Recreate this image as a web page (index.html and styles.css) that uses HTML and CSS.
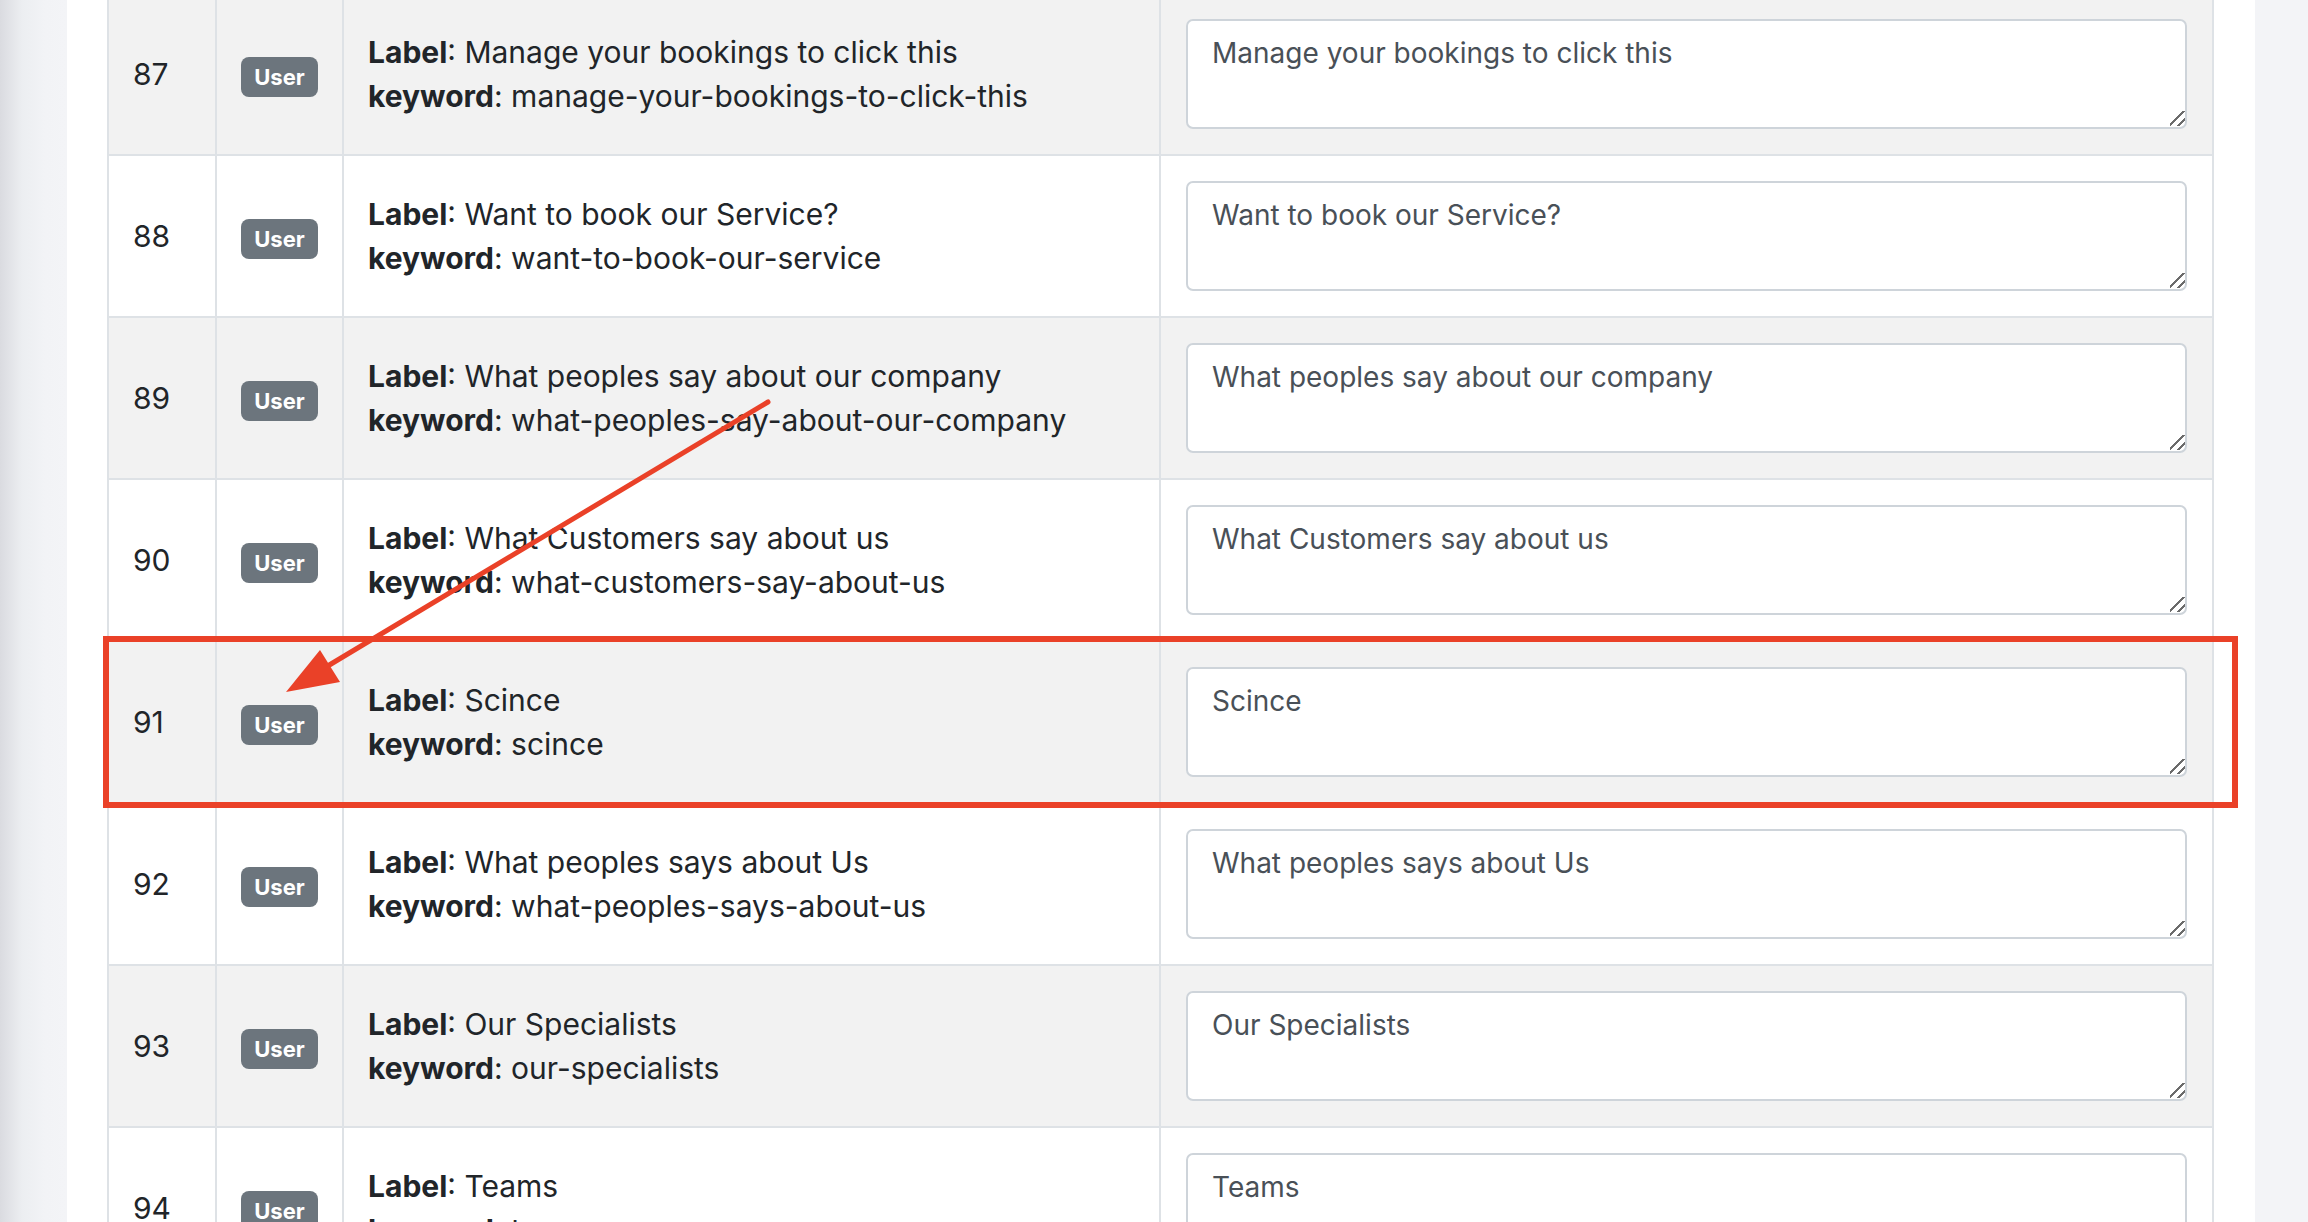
FILE: index.html
```html
<!DOCTYPE html>
<html lang="en">
<head>
<meta charset="utf-8">
<title>Translations</title>
<link rel="stylesheet" href="styles.css">
</head>
<body>
<div class="page">
  <div class="panel">
    <div class="table">
      <div class="row odd">
        <div class="cell num">87</div>
        <div class="cell role"><span class="badge">User</span></div>
        <div class="cell info"><div><b>Label</b>: Manage your bookings to click this</div><div><b>keyword</b>: manage-your-bookings-to-click-this</div></div>
        <div class="cell value"><div class="field"><textarea>Manage your bookings to click this</textarea></div></div>
      </div>
      <div class="row">
        <div class="cell num">88</div>
        <div class="cell role"><span class="badge">User</span></div>
        <div class="cell info"><div><b>Label</b>: Want to book our Service?</div><div><b>keyword</b>: want-to-book-our-service</div></div>
        <div class="cell value"><div class="field"><textarea>Want to book our Service?</textarea></div></div>
      </div>
      <div class="row odd">
        <div class="cell num">89</div>
        <div class="cell role"><span class="badge">User</span></div>
        <div class="cell info"><div><b>Label</b>: What peoples say about our company</div><div><b>keyword</b>: what-peoples-say-about-our-company</div></div>
        <div class="cell value"><div class="field"><textarea>What peoples say about our company</textarea></div></div>
      </div>
      <div class="row">
        <div class="cell num">90</div>
        <div class="cell role"><span class="badge">User</span></div>
        <div class="cell info"><div><b>Label</b>: What Customers say about us</div><div><b>keyword</b>: what-customers-say-about-us</div></div>
        <div class="cell value"><div class="field"><textarea>What Customers say about us</textarea></div></div>
      </div>
      <div class="row odd">
        <div class="cell num">91</div>
        <div class="cell role"><span class="badge">User</span></div>
        <div class="cell info"><div><b>Label</b>: Scince</div><div><b>keyword</b>: scince</div></div>
        <div class="cell value"><div class="field"><textarea>Scince</textarea></div></div>
      </div>
      <div class="row">
        <div class="cell num">92</div>
        <div class="cell role"><span class="badge">User</span></div>
        <div class="cell info"><div><b>Label</b>: What peoples says about Us</div><div><b>keyword</b>: what-peoples-says-about-us</div></div>
        <div class="cell value"><div class="field"><textarea>What peoples says about Us</textarea></div></div>
      </div>
      <div class="row odd">
        <div class="cell num">93</div>
        <div class="cell role"><span class="badge">User</span></div>
        <div class="cell info"><div><b>Label</b>: Our Specialists</div><div><b>keyword</b>: our-specialists</div></div>
        <div class="cell value"><div class="field"><textarea>Our Specialists</textarea></div></div>
      </div>
      <div class="row">
        <div class="cell num">94</div>
        <div class="cell role"><span class="badge">User</span></div>
        <div class="cell info"><div><b>Label</b>: Teams</div><div><b>keyword</b>: teams</div></div>
        <div class="cell value"><div class="field"><textarea>Teams</textarea></div></div>
      </div>
    </div>
  </div>
  <div class="highlight"></div>
  <svg class="arrow" width="2308" height="1222" viewBox="0 0 2308 1222">
    <line x1="768" y1="402" x2="326" y2="667" stroke="#ea4128" stroke-width="5" stroke-linecap="round"/>
    <polygon points="286,692 340,682 320,650" fill="#ea4128"/>
  </svg>
</div>
</body>
</html>
```

FILE: styles.css
```css
html, body {
  margin: 0;
  padding: 0;
}
body {
  width: 2308px;
  height: 1222px;
  overflow: hidden;
  background: #f3f4f7;
  font-family: Inter, "Noto Sans", sans-serif;
  color: #212529;
}
.page {
  position: relative;
  width: 2308px;
  height: 1222px;
  overflow: hidden;
  display: flex;
  background: linear-gradient(to right, #dadbe0 0px, #eceef1 22px, #f2f3f6 45px, #f3f4f7 67px);
}
.panel {
  margin-left: 67px;
  width: 2188px;
  height: 1222px;
  background: #ffffff;
  padding: 0 41px 0 40px;
  box-sizing: border-box;
}
.table {
  margin-top: -6px;
  width: 2107px;
}
.row {
  display: grid;
  grid-template-columns: 110px 127px 817px 1053px;
  border-bottom: 2px solid #dee2e6;
  background: #ffffff;
}
.row.odd {
  background: #f2f2f2;
}
.cell {
  box-sizing: border-box;
  border-right: 2px solid #dee2e6;
  display: flex;
  align-items: center;
  padding: 0 24px;
  font-size: 30px;
  line-height: 44px;
}
.cell.num {
  border-left: 2px solid #dee2e6;
  padding-left: 24px;
  padding-top: 0;
}
.cell.role {
  padding-top: 6px;
}
.cell.info {
  flex-direction: column;
  align-items: flex-start;
  justify-content: center;
}
.cell.info b {
  font-weight: 700;
}
.cell.value {
  padding: 25px 25px;
}
.badge {
  display: inline-flex;
  align-items: center;
  justify-content: center;
  height: 40px;
  width: 77px;
  box-sizing: border-box;
  border-radius: 8px;
  background: #6c757d;
  color: #ffffff;
  font-weight: 700;
  font-size: 22px;
  line-height: 1;
}
.field {
  position: relative;
  width: 100%;
}
.field::after {
  content: "";
  position: absolute;
  right: 2px;
  bottom: 3px;
  width: 15px;
  height: 15px;
  background: linear-gradient(135deg, transparent 42%, #6b6b6b 42%, #6b6b6b 52%, transparent 52%, transparent 72%, #6b6b6b 72%, #6b6b6b 82%, transparent 82%);
  pointer-events: none;
}
textarea {
  display: block;
  width: 100%;
  height: 110px;
  box-sizing: border-box;
  border: 2px solid #ced4da;
  border-radius: 7px;
  background: #ffffff;
  padding: 10px 24px;
  margin: 0;
  font-family: Inter, "Noto Sans", sans-serif;
  font-size: 28px;
  line-height: 44px;
  color: #495057;
  outline: none;
  resize: none;
}
.highlight {
  position: absolute;
  left: 103px;
  top: 636px;
  width: 2135px;
  height: 172px;
  box-sizing: border-box;
  border: 6px solid #ea4128;
  pointer-events: none;
}
.arrow {
  position: absolute;
  left: 0;
  top: 0;
  pointer-events: none;
}
```
